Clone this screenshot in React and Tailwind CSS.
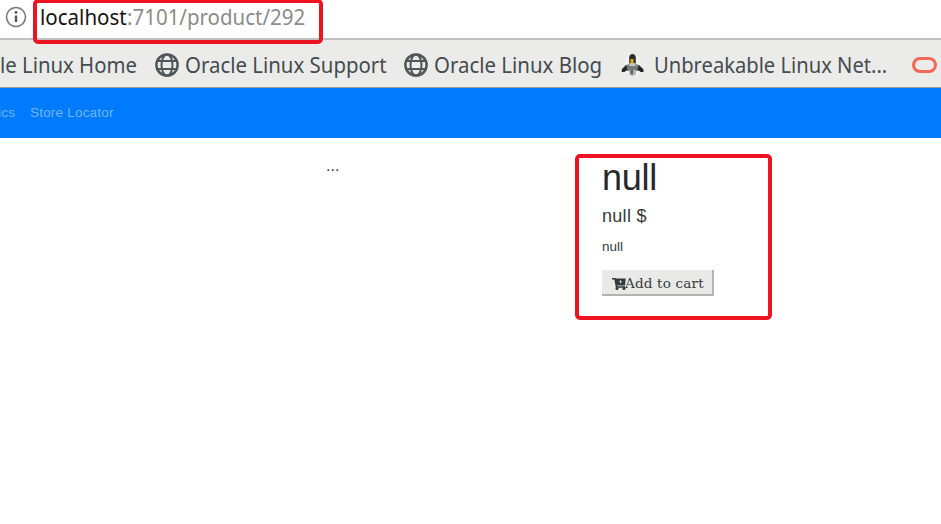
function InfoIcon() {
  return (
    <svg className="ml-[5px] mt-[6px] h-[22px] w-[22px] shrink-0" viewBox="0 0 22 22" fill="none">
      <circle cx="11" cy="11" r="9.5" stroke="#777" strokeWidth="1.6" />
      <path d="M11 9.5v6.5" stroke="#555" strokeWidth="2.4" />
      <circle cx="11" cy="6.4" r="1.4" fill="#555" />
    </svg>
  );
}

function Globe() {
  return (
    <svg className="h-6 w-6 shrink-0" viewBox="0 0 24 24" fill="none" stroke="#50575b">
      <circle cx="12" cy="12" r="10.6" strokeWidth="2.5" />
      <ellipse cx="12" cy="12" rx="5.5" ry="10.6" strokeWidth="2" />
      <path d="M2.500 8h19M2.500 16h19" strokeWidth="1.9" />
    </svg>
  );
}

function Penguin() {
  return (
    <svg className="h-6 w-6 shrink-0" viewBox="0 0 24 24">
      <path d="M5 4h13l3 14-6 5H8l-5-6z" fill="#f6f6f5" opacity="0.6" />
      <path d="M8.200 12V4.500Q8.500 1 11.500 1T14.800 4.500V12z" fill="#2c2c2d" />
      <path d="M6 11.500h11l5 4.500v2H1v-2z" fill="#77797b" />
      <path d="M5 12L.8 16.500v2.500h2.700l3-3zM18 12l4.500 4.500v2.500h-3l-3-3z" fill="#242426" />
      <path d="M8 17h7v4.500L12 23l-3.500-1z" fill="#b5b6b8" />
      <path d="M9.500 17h2.500v4.500H9.500z" fill="#606164" />
      <path d="M8.500 10h6v3h-6z" fill="#c7c6c2" />
      <path d="M9.500 6h3v4.500h-3z" fill="#e6a922" />
    </svg>
  );
}

function Cart() {
  return (
    <svg className="mt-[3px] h-[14px] w-[14px] shrink-0" viewBox="0 0 14 14" fill="none">
      <path d="M0 1.700h3l1.500 8.300h8.500" stroke="#30363a" strokeWidth="1.500" />
      <path d="M3 1.500h10.700l-.7 7H4.500z" fill="#30363a" />
      <path d="M8.500 3v3.500M6.800 4.700h3.500" stroke="#b5b8b8" strokeWidth="1" />
      <circle cx="5" cy="11.500" r="1.500" fill="#30363a" />
      <circle cx="12" cy="11.500" r="1.500" fill="#30363a" />
    </svg>
  );
}

const bookmarkText =
  "block origin-left whitespace-nowrap text-[22.5px] leading-[30px] text-[#454b4f]";

export default function App() {
  return (
    <div className="relative h-[524px] w-[941px] overflow-hidden bg-white font-['Liberation_Sans',sans-serif]">
      <header className="font-['Noto_Sans',sans-serif]">
        <div className="flex h-[38px] items-start">
          <InfoIcon />
          <div className="ml-[13px] mt-px flex whitespace-nowrap text-[22px] leading-[30px]">
            <span className="block w-[87px] shrink-0">
              <span className="block origin-left scale-x-[0.933] text-[#141414]">localhost</span>
            </span>
            <span className="block origin-left scale-x-[0.931] text-[#8b8b8b]">:7101/product/292</span>
          </div>
        </div>
        <nav className="flex h-[50px] items-start border-b border-t-2 border-b-[#9a9d9e] border-t-[#c0c1bf] bg-[#ebebe9] pt-[10px]">
          <div className="w-[155px] shrink-0">
            <span className={bookmarkText + " scale-x-[0.904]"}>le Linux Home</span>
          </div>
          <div className="flex w-[249px] shrink-0 pt-[3px]">
            <Globe />
            <span className={bookmarkText + " -mt-[3px] ml-[6px] scale-x-[0.907]"}>Oracle Linux Support</span>
          </div>
          <div className="flex w-[217px] shrink-0 pt-[3px]">
            <Globe />
            <span className={bookmarkText + " -mt-[3px] ml-[6px] scale-x-[0.908]"}>Oracle Linux Blog</span>
          </div>
          <div className="flex w-[291px] shrink-0 pt-[3px]">
            <Penguin />
            <span className={bookmarkText + " -mt-[3px] ml-[9px] scale-x-[0.896]"}>Unbreakable Linux Net...</span>
          </div>
          <span className="mt-[7px] block h-4 w-[25px] shrink-0 rounded-full border-[3px] border-[#f76656]" />
        </nav>
      </header>

      <nav className="flex h-[50px] items-start whitespace-nowrap bg-[#007bff] pt-[17px] text-[13.5px] leading-4 tracking-[0.2px] text-[#72b6ff]">
        <span className="block w-[30px] -translate-x-[2px]">ics</span>
        <span className="block">Store Locator</span>
      </nav>

      <main className="flex text-[#343a40]">
        <div className="w-[602px] shrink-0 pl-[326px] pt-[18px] text-[16px] leading-5">...</div>
        <section className="pt-[18px]">
          <h1 className="text-[36px] leading-[44px] tracking-[-0.3px] text-[#25292d]">null</h1>
          <h2 className="mt-[5px] text-[18px] leading-[22px] tracking-[0.3px]">null $</h2>
          <p className="mt-[12px] text-[13.5px] leading-4">null</p>
          <button className="mt-[15px] flex h-[26px] w-[112px] items-center border-b-2 border-r-2 border-[#b3b3b2] bg-[#e9e9e7] pl-[10px] font-['DejaVu_Serif',serif] text-[13.5px] tracking-[0.2px] text-[#343a3d]">
            <Cart />
            <span className="-ml-px mt-[2px] whitespace-nowrap">Add to cart</span>
          </button>
        </section>
      </main>

      <div className="absolute left-[33px] top-[-1px] h-[45px] w-[290px] rounded-[5px] border-4 border-[#ed1320]" />
      <div className="absolute left-[575px] top-[154px] h-[166px] w-[197px] rounded-[5px] border-4 border-[#ed1320]" />
    </div>
  );
}
